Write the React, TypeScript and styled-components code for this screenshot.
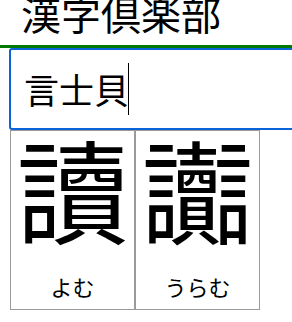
import React from "react";
import styled, { createGlobalStyle } from "styled-components";

const Global = createGlobalStyle`
  html, body {
    margin: 0;
    padding: 0;
    background: #ffffff;
    overflow: hidden;
  }
  body {
    font-family: "Noto Sans CJK JP", "Noto Sans", sans-serif;
    color: #000000;
  }
`;

const Page = styled.div`
  width: 292px;
  height: 322px;
  overflow: hidden;
`;

const Title = styled.h1`
  margin: -7px 0 0 0;
  height: 52px;
  padding: 0 0 0 21px;
  font-size: 40px;
  line-height: 40px;
  font-weight: 400;
  white-space: nowrap;
  border-bottom: 3px solid #007a00;
`;

const Main = styled.main`
  display: flex;
  flex-direction: column;
  padding: 0 0 0 9px;
`;

const SearchBox = styled.div`
  box-sizing: border-box;
  width: 320px;
  height: 82px;
  border: 2px solid #0a63d9;
  border-radius: 3px;
  display: flex;
  align-items: center;
  padding-left: 13px;
  font-size: 35px;
  line-height: 52px;
  white-space: nowrap;
`;

const Caret = styled.span`
  display: inline-block;
  width: 1px;
  height: 52px;
  margin-left: -1px;
  background: #000000;
`;

const Results = styled.div`
  display: flex;
  padding-left: 1px;
`;

const Card = styled.div`
  box-sizing: border-box;
  width: 125px;
  height: 180px;
  border: 1px solid #9a9a9a;
  display: flex;
  flex-direction: column;
  align-items: center;
`;

const Glyph = styled.div`
  font-size: 112px;
  line-height: 112px;
  margin-top: 0;
`;

const Reading = styled.div`
  margin-top: auto;
  margin-bottom: 8px;
  font-size: 22px;
  line-height: 30px;
`;

const results = [
  { kanji: "讀", reading: "よむ" },
  { kanji: "讟", reading: "うらむ" },
];

export default function App() {
  return (
    <Page>
      <Global />
      <Title>漢字倶楽部</Title>
      <Main>
        <SearchBox>
          言士貝
          <Caret />
        </SearchBox>
        <Results>
          {results.map((r) => (
            <Card key={r.kanji}>
              <Glyph>{r.kanji}</Glyph>
              <Reading>{r.reading}</Reading>
            </Card>
          ))}
        </Results>
      </Main>
    </Page>
  );
}
